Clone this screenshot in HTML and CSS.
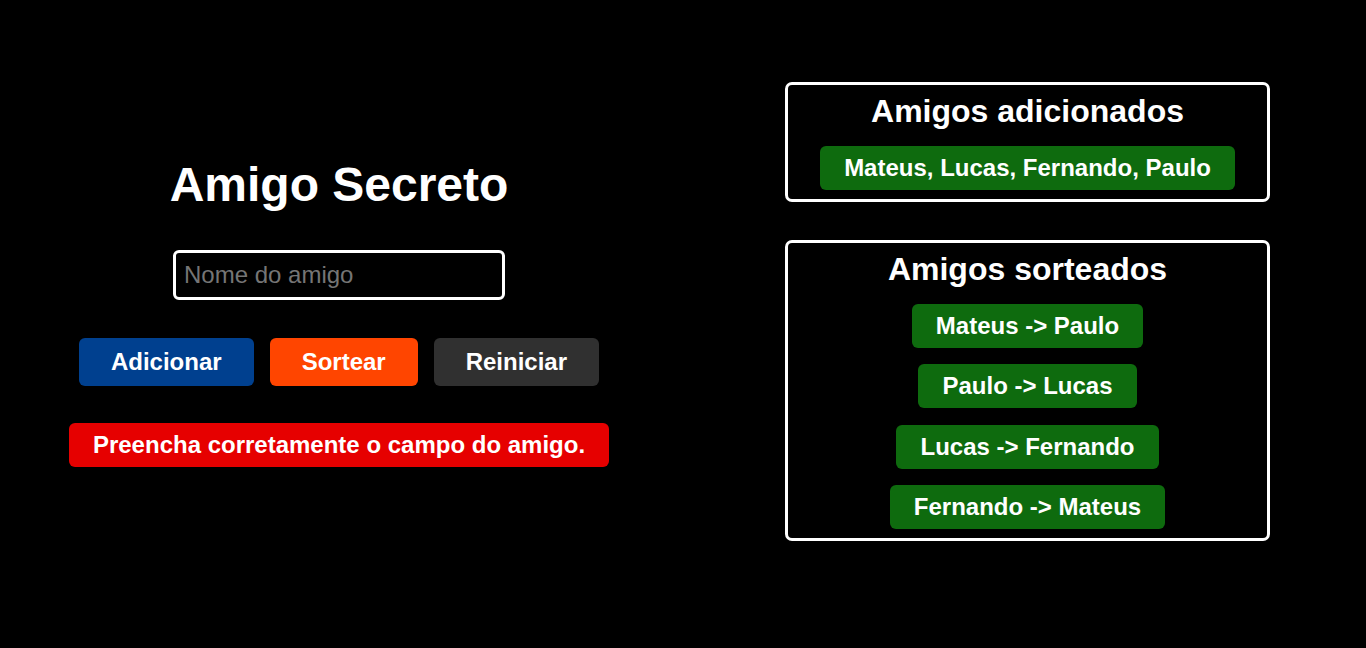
FILE: index.html
```html
<!DOCTYPE html>
<html lang="pt-BR">
<head>
<meta charset="utf-8">
<title>Amigo Secreto</title>
<link rel="stylesheet" href="styles.css">
</head>
<body>
<main class="page">
  <section class="form-col">
    <h1 class="title">Amigo Secreto</h1>
    <input class="name-input" type="text" placeholder="Nome do amigo">
    <div class="actions">
      <button class="btn btn-add">Adicionar</button>
      <button class="btn btn-draw">Sortear</button>
      <button class="btn btn-reset">Reiniciar</button>
    </div>
    <p class="error">Preencha corretamente o campo do amigo.</p>
  </section>
  <section class="lists-col">
    <div class="box">
      <h2 class="box-title">Amigos adicionados</h2>
      <p class="pill">Mateus, Lucas, Fernando, Paulo</p>
    </div>
    <div class="box">
      <h2 class="box-title">Amigos sorteados</h2>
      <ul class="pill-list">
        <li class="pill">Mateus -&gt; Paulo</li>
        <li class="pill">Paulo -&gt; Lucas</li>
        <li class="pill">Lucas -&gt; Fernando</li>
        <li class="pill">Fernando -&gt; Mateus</li>
      </ul>
    </div>
  </section>
</main>
</body>
</html>
```

FILE: styles.css
```css
* { box-sizing: border-box; }

html, body {
  margin: 0;
  background: #000;
  color: #fff;
  font-family: "Liberation Sans", Arial, sans-serif;
}

body { min-height: 648px; }

.page {
  display: flex;
  align-items: center;
  gap: 176px;
  padding: 82px 0 0 69px;
}

.form-col {
  width: 540px;
  display: flex;
  flex-direction: column;
  align-items: center;
}

.title {
  margin: 0 0 38px;
  font-size: 48px;
  font-weight: bold;
  line-height: normal;
}

.name-input {
  width: 332px;
  height: 50px;
  border: 3px solid #fff;
  border-radius: 6px;
  background: #000;
  color: #fff;
  font-family: "Liberation Sans", Arial, sans-serif;
  font-size: 24px;
  padding: 8px 8px;
  margin: 0 0 38px;
  outline: none;
}

.name-input::placeholder { color: #757575; }

.actions {
  display: flex;
  gap: 16px;
  margin: 0 0 37px;
}

.btn {
  border: none;
  border-radius: 6px;
  color: #fff;
  font-family: "Liberation Sans", Arial, sans-serif;
  font-size: 24px;
  font-weight: bold;
  line-height: normal;
  padding: 10px 32px;
  cursor: pointer;
}

.btn-add { background: #00408f; }
.btn-draw { background: #ff4500; }
.btn-reset { background: #303030; }

.error {
  margin: 0;
  width: 540px;
  text-align: center;
  white-space: nowrap;
  background: #e60000;
  border-radius: 6px;
  padding: 8px 0;
  font-size: 24px;
  font-weight: bold;
  line-height: normal;
}

.lists-col {
  width: 485px;
  display: flex;
  flex-direction: column;
  gap: 38px;
}

.box {
  border: 3px solid #fff;
  border-radius: 7px;
  padding: 8px 8px 9px;
  display: flex;
  flex-direction: column;
  align-items: center;
}

.box-title {
  margin: 0 0 16px;
  font-size: 32px;
  font-weight: bold;
  line-height: normal;
}

.pill {
  margin: 0;
  background: #0e6b0e;
  border-radius: 6px;
  padding: 8px 24px;
  font-size: 24px;
  font-weight: bold;
  line-height: normal;
  list-style: none;
}

.pill-list {
  margin: 0;
  padding: 0;
  display: flex;
  flex-direction: column;
  align-items: center;
  gap: 16.4px;
}
```
